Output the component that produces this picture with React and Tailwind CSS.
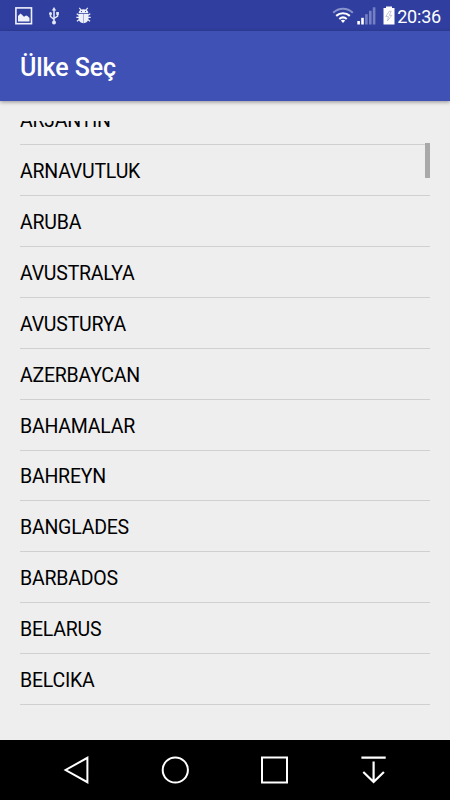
const countries = [
  'ARJANTIN',
  'ARNAVUTLUK',
  'ARUBA',
  'AVUSTRALYA',
  'AVUSTURYA',
  'AZERBAYCAN',
  'BAHAMALAR',
  'BAHREYN',
  'BANGLADES',
  'BARBADOS',
  'BELARUS',
  'BELCIKA',
];

function StatusBar() {
  return (
    <div className="flex h-[31px] shrink-0 items-center justify-between bg-[#303f9f] pr-[9px] pl-[15px] text-white">
      <div className="flex items-center">
        <svg width="18" height="18" viewBox="0 0 18 18" className="text-[#eef0fa]">
          <rect x="0.9" y="0.9" width="15.6" height="15.8" fill="none" stroke="currentColor" strokeWidth="1.6" />
          <path d="M3 14.5V9L5.5 6.5L7 7.8L9 9.8L11 8.5L12.5 9L14.5 11V14.5Z" fill="currentColor" />
        </svg>
        <svg width="10" height="18" viewBox="0 0 10 18" className="ml-[16px] text-[#e4e7f6]">
          <path d="M5 3V15M1.5 6.5V9.5L5 12.5M8.6 6.5V9L5 11.5" fill="none" stroke="currentColor" strokeWidth="1.5" />
          <path d="M5 0L7.2 3.6H2.8Z" fill="currentColor" />
          <circle cx="1.5" cy="6.5" r="1.5" fill="currentColor" />
          <rect x="7.2" y="5" width="2.7" height="2.8" fill="currentColor" />
          <circle cx="5" cy="15.6" r="2" fill="currentColor" />
        </svg>
        <svg width="15" height="17" viewBox="0 0 15 17" className="ml-[17px] text-[#eef0fa]">
          <path d="M2.6 6.3C2.6 3.6 4.6 2.2 7.5 2.2S12.4 3.6 12.4 6.3Z" fill="currentColor" />
          <path d="M2.6 7.1H12.4V11.5C12.4 14.2 10.2 16.2 7.5 16.2S2.6 14.2 2.6 11.5Z" fill="currentColor" />
          <path
            d="M3.3 0.8L5 3M11.7 0.8L10 3M0.7 6.8L3 8.2M14.3 6.8L12 8.2M0.3 10.4H3.5M14.7 10.4H11.5M0.9 14.2L3.4 12.6M14.1 14.2L11.6 12.6"
            fill="none"
            stroke="currentColor"
            strokeWidth="1.2"
          />
          <path d="M7.5 7V16" stroke="#8993cc" strokeWidth="0.7" />
          <path d="M5 4.6H6M9 4.6H10" stroke="#303f9f" strokeWidth="1" />
        </svg>
      </div>

      <div className="flex items-center">
        <svg width="22" height="18" viewBox="0 0 22 18" fill="none">
          <path d="M1.2 5.7C6.8 0.3 15.2 0.3 20.8 5.7" stroke="#8993cc" strokeWidth="2" />
          <path d="M4.2 8.9C8.2 5.3 13.8 5.3 17.8 8.9" stroke="#fff" strokeWidth="2.1" />
          <path d="M7.3 12.1C9.5 10.1 12.5 10.1 14.7 12.1" stroke="#fff" strokeWidth="2" />
          <path d="M8.8 13.6C10.2 12.6 11.8 12.6 13.2 13.6L11 16Z" fill="#fff" />
        </svg>
        <svg width="19" height="18" viewBox="0 0 19 18" className="ml-[3px]">
          <rect x="0.3" y="14" width="2.6" height="3.5" fill="#fff" />
          <rect x="4.2" y="10.8" width="2.6" height="6.7" fill="#fff" />
          <rect x="8.1" y="7.2" width="2.6" height="10.3" fill="#7580c2" />
          <rect x="12" y="3.8" width="2.6" height="13.7" fill="#7580c2" />
          <rect x="15.8" y="0.3" width="2.6" height="17.2" fill="#7580c2" />
        </svg>
        <svg width="12" height="19" viewBox="0 0 12 19" className="ml-[7px]">
          <path d="M3 0.5H9V2H11.5V18.5H0.5V2H3Z" fill="#fff" />
          <path d="M6.2 5.3L2.8 10.6H5.5L4.3 15L8.9 9.3H6.3L8.2 5.3Z" fill="none" stroke="#b4b8cc" strokeWidth="0.8" />
        </svg>
        <span className="ml-[2px] pt-[2px] text-[18px] leading-none tracking-[-0.2px]">20:36</span>
      </div>
    </div>
  );
}

function NavigationBar() {
  return (
    <div className="flex h-[60px] shrink-0 items-center bg-black pr-[27px] pl-[25px]">
      <div className="flex flex-1 justify-center">
        <svg width="30" height="30" viewBox="0 0 30 30" fill="none" stroke="#fff" strokeWidth="2">
          <path d="M27.4 2.8V27.2L5.6 15Z" />
        </svg>
      </div>
      <div className="flex flex-1 justify-center">
        <svg width="30" height="30" viewBox="0 0 30 30" fill="none" stroke="#fff" strokeWidth="2">
          <circle cx="16.3" cy="15" r="12.6" />
        </svg>
      </div>
      <div className="flex flex-1 justify-center">
        <svg width="30" height="30" viewBox="0 0 30 30" fill="none" stroke="#fff" strokeWidth="2">
          <rect x="3" y="2.5" width="25" height="25" />
        </svg>
      </div>
      <div className="flex flex-1 justify-center">
        <svg width="30" height="30" viewBox="0 0 30 30" fill="none" stroke="#fff" strokeWidth="2.2">
          <path d="M3.4 2.7H27.7M15.6 6.5V26.5M5.3 17L15.6 27L25.9 17" />
        </svg>
      </div>
    </div>
  );
}

export default function App() {
  return (
    <div className="flex h-[800px] w-[450px] flex-col overflow-hidden bg-[#eeeeee] font-[Roboto,sans-serif]">
      <StatusBar />
      <header className="z-10 flex h-[70px] shrink-0 items-center bg-[#3f51b5] px-5 pt-[2px] shadow-[0_1px_4px_rgba(0,0,0,0.4)]">
        <h1 className="text-[25px] leading-none font-medium tracking-[-0.1px] text-white">Ülke Seç</h1>
      </header>

      <main className="relative mx-5 mt-5 mb-5 min-h-0 flex-1 overflow-hidden">
        <ul className="-mt-[26.4px]">
          {countries.map((name) => (
            <li
              key={name}
              className="flex h-[50.86px] items-center border-b border-[#d0d0d0] pt-[3px] text-[19.5px] tracking-[-0.22px] text-black"
            >
              {name}
            </li>
          ))}
        </ul>
        <div className="absolute top-[22px] right-0 h-[35px] w-[5px] bg-[#a9a9a9]" />
      </main>

      <NavigationBar />
    </div>
  );
}
